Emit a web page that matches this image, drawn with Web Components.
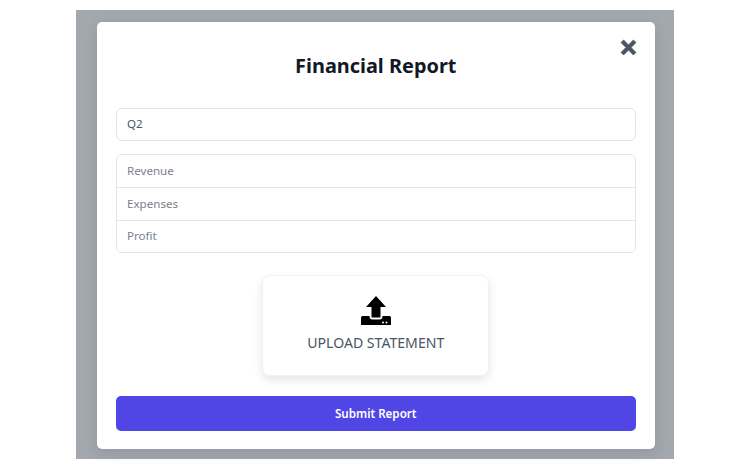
<!DOCTYPE html>
<html>
<head>
<meta charset="utf-8">
<title>Financial Report</title>
<style>
html, body { margin: 0; height: 469px; background: #fff; overflow: hidden; }
body { font-family: "Noto Sans", sans-serif; }
</style>
</head>
<body>
<report-overlay>
  <report-modal heading="Financial Report">
    <text-field value="Q2"></text-field>
    <field-group>
      <text-field grouped placeholder="Revenue"></text-field>
      <text-field grouped placeholder="Expenses"></text-field>
      <text-field grouped placeholder="Profit"></text-field>
    </field-group>
    <upload-card label="UPLOAD STATEMENT"></upload-card>
    <submit-button>Submit Report</submit-button>
  </report-modal>
</report-overlay>
<script>
class ReportOverlay extends HTMLElement {
  constructor() {
    super()
    this.attachShadow({mode: 'open'}).innerHTML = `
    <style>
    :host { display: block; box-sizing: border-box; width: 598px; height: 449px; margin: 10px 0 0 76px; padding: 12px 19px 10px 21px; background: #a3a7ae; }
    </style>
    <slot></slot>`
  }
}
class ReportModal extends HTMLElement {
  constructor() {
    super()
    this.attachShadow({mode: 'open'}).innerHTML = `
    <style>
    :host { display: flex; flex-direction: column; position: relative; box-sizing: border-box; height: 427px; padding: 26px 19px 18px 18.5px; background: #fff; border-radius: 5px; box-shadow: 0 4px 14px rgba(0,0,0,.1); }
    h2 { margin: 0 0 25px; height: 35px; text-align: center; font: 700 19.9px/36px "Noto Sans", sans-serif; color: #111827; }
    button { position: absolute; top: 17px; right: 18px; width: 17px; height: 17px; padding: 0; border: 0; background: none; color: #4b5563; }
    svg { display: block; width: 17px; height: 17px; }
    .body { display: flex; flex-direction: column; flex: 1; }
    </style>
    <button aria-label="Close"><svg viewBox="0 0 16 16"><path d="M3.400 1 8 5.600 12.600 1 15 3.400 10.400 8 15 12.600 12.600 15 8 10.400 3.400 15 1 12.600 5.600 8 1 3.400Z" fill="currentColor" stroke="currentColor" stroke-width=".8" stroke-linejoin="round"/></svg></button>
    <h2>${this.getAttribute('heading')}</h2>
    <div class="body"><slot></slot></div>`
  }
}
class TextField extends HTMLElement {
  constructor() {
    super()
    const value = this.getAttribute('value')
    this.attachShadow({mode: 'open'}).innerHTML = `
    <style>
    :host { display: block; box-sizing: border-box; height: 33px; padding: 0 10.5px; border: 1px solid #e2e4e8; border-radius: 6px; background: #fff; font: 11.6px/30px "Noto Sans", sans-serif; color: #4b5563; }
    :host([grouped]) { height: 33px; border: 0; border-radius: 0; padding: 0 10.5px; line-height: 31px; color: #7b828e; border-bottom: 1px solid #e2e4e8; }
    :host([grouped]:last-child) { border-bottom: 0; line-height: 30px; }
    </style>
    <span>${value || this.getAttribute('placeholder')}</span>`
  }
}
class FieldGroup extends HTMLElement {
  constructor() {
    super()
    this.attachShadow({mode: 'open'}).innerHTML = `
    <style>
    :host { display: block; box-sizing: border-box; margin-top: 13px; height: 99px; border: 1px solid #e2e4e8; border-radius: 6px; overflow: hidden; }
    </style>
    <slot></slot>`
  }
}
class UploadCard extends HTMLElement {
  constructor() {
    super()
    this.attachShadow({mode: 'open'}).innerHTML = `
    <style>
    :host { display: flex; flex-direction: column; align-items: center; box-sizing: border-box; align-self: center; width: 227px; height: 101px; margin-top: 22px; padding-top: 20px; background: #fff; border: 1px solid #f1f2f4; border-radius: 8px; box-shadow: 0 4px 10px rgba(0,0,0,.1); }
    svg { display: block; width: 30px; height: 30px; }
    span { margin-top: 7px; font: 400 14.1px/20px "Noto Sans", sans-serif; color: #4b5563; }
    </style>
    <svg viewBox="0 0 30 30"><path fill="#000" d="M15 0 25 11H19.500V21.500H10.500V11H5Z"/><path fill="#000" d="M0 21.500Q0 20 1.500 20H8.500Q8.500 23.500 11.500 23.500H18.500Q21.500 23.500 21.500 20H28.500Q30 20 30 21.500V29H0Z"/><circle cx="22" cy="26.500" r="1" fill="#fff"/><circle cx="25.500" cy="26.500" r="1" fill="#fff"/></svg>
    <span>${this.getAttribute('label')}</span>`
  }
}
class SubmitButton extends HTMLElement {
  constructor() {
    super()
    this.attachShadow({mode: 'open'}).innerHTML = `
    <style>
    :host { display: block; box-sizing: border-box; height: 35px; margin-top: 20px; background: #4f46e5; border-radius: 5px; text-align: center; font: 600 11.600px/35px "Noto Sans", sans-serif; color: #fff; }
    </style>
    <slot></slot>`
  }
}
window.customElements.define('report-overlay', ReportOverlay)
window.customElements.define('report-modal', ReportModal)
window.customElements.define('text-field', TextField)
window.customElements.define('field-group', FieldGroup)
window.customElements.define('upload-card', UploadCard)
window.customElements.define('submit-button', SubmitButton)
</script>
</body>
</html>
